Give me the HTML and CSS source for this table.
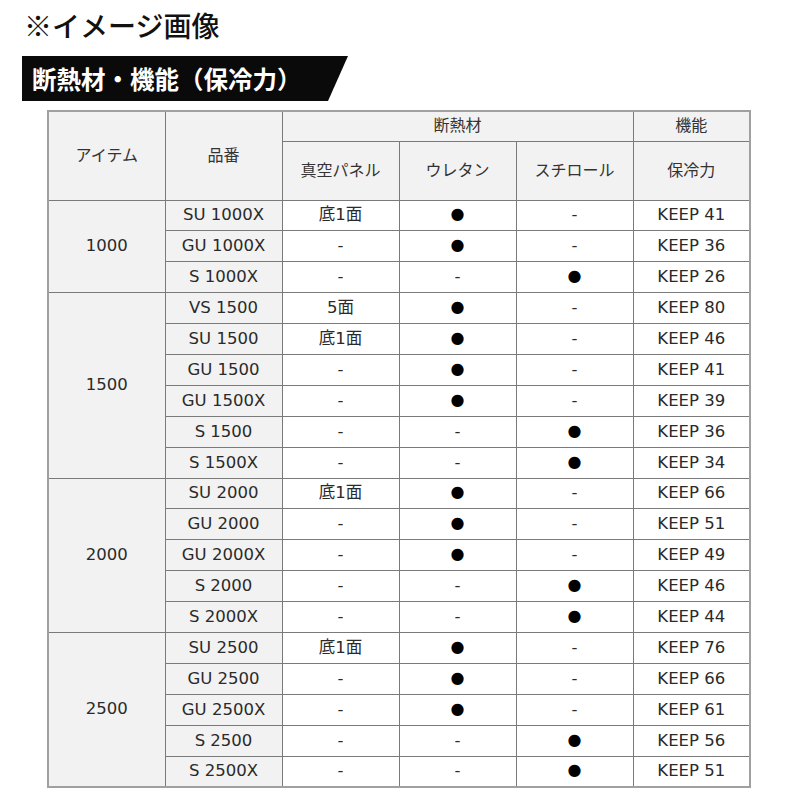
FILE: index.html
```html
<!DOCTYPE html>
<html lang="ja">
<head>
<meta charset="utf-8">
<link rel="stylesheet" href="styles.css">
</head>
<body>
<div class="page">
  <h1 class="title">※イメージ画像</h1>
  <div class="banner"><span class="banner-text">断熱材・機能（保冷力）</span></div>
  <table class="spec">
    <colgroup>
      <col class="c"><col class="c"><col class="c"><col class="c"><col class="c"><col class="c">
    </colgroup>
    <thead>
      <tr class="h1">
        <th rowspan="2">アイテム</th>
        <th rowspan="2">品番</th>
        <th colspan="3">断熱材</th>
        <th>機能</th>
      </tr>
      <tr class="h2">
        <th>真空パネル</th>
        <th>ウレタン</th>
        <th>スチロール</th>
        <th>保冷力</th>
      </tr>
    </thead>
    <tbody>
      <tr><td class="g" rowspan="3">1000</td><td class="g">SU 1000X</td><td>底1面</td><td><span class="dot">●</span></td><td>-</td><td>KEEP 41</td></tr>
      <tr><td class="g">GU 1000X</td><td>-</td><td><span class="dot">●</span></td><td>-</td><td>KEEP 36</td></tr>
      <tr><td class="g">S 1000X</td><td>-</td><td>-</td><td><span class="dot">●</span></td><td>KEEP 26</td></tr>

      <tr><td class="g" rowspan="6">1500</td><td class="g">VS 1500</td><td>5面</td><td><span class="dot">●</span></td><td>-</td><td>KEEP 80</td></tr>
      <tr><td class="g">SU 1500</td><td>底1面</td><td><span class="dot">●</span></td><td>-</td><td>KEEP 46</td></tr>
      <tr><td class="g">GU 1500</td><td>-</td><td><span class="dot">●</span></td><td>-</td><td>KEEP 41</td></tr>
      <tr><td class="g">GU 1500X</td><td>-</td><td><span class="dot">●</span></td><td>-</td><td>KEEP 39</td></tr>
      <tr><td class="g">S 1500</td><td>-</td><td>-</td><td><span class="dot">●</span></td><td>KEEP 36</td></tr>
      <tr><td class="g">S 1500X</td><td>-</td><td>-</td><td><span class="dot">●</span></td><td>KEEP 34</td></tr>

      <tr><td class="g" rowspan="5">2000</td><td class="g">SU 2000</td><td>底1面</td><td><span class="dot">●</span></td><td>-</td><td>KEEP 66</td></tr>
      <tr><td class="g">GU 2000</td><td>-</td><td><span class="dot">●</span></td><td>-</td><td>KEEP 51</td></tr>
      <tr><td class="g">GU 2000X</td><td>-</td><td><span class="dot">●</span></td><td>-</td><td>KEEP 49</td></tr>
      <tr><td class="g">S 2000</td><td>-</td><td>-</td><td><span class="dot">●</span></td><td>KEEP 46</td></tr>
      <tr><td class="g">S 2000X</td><td>-</td><td>-</td><td><span class="dot">●</span></td><td>KEEP 44</td></tr>

      <tr><td class="g" rowspan="5">2500</td><td class="g">SU 2500</td><td>底1面</td><td><span class="dot">●</span></td><td>-</td><td>KEEP 76</td></tr>
      <tr><td class="g">GU 2500</td><td>-</td><td><span class="dot">●</span></td><td>-</td><td>KEEP 66</td></tr>
      <tr><td class="g">GU 2500X</td><td>-</td><td><span class="dot">●</span></td><td>-</td><td>KEEP 61</td></tr>
      <tr><td class="g">S 2500</td><td>-</td><td>-</td><td><span class="dot">●</span></td><td>KEEP 56</td></tr>
      <tr><td class="g">S 2500X</td><td>-</td><td>-</td><td><span class="dot">●</span></td><td>KEEP 51</td></tr>
    </tbody>
  </table>
</div>
</body>
</html>
```

FILE: styles.css
```css
* { box-sizing: border-box; }
html, body { margin: 0; padding: 0; background: #fff; }
.page {
  width: 800px;
  height: 800px;
  padding: 8px 0 0 0;
  font-family: "DejaVu Sans", "Noto Sans CJK JP", sans-serif;
  color: #222;
}
.title {
  margin: 0 0 0 24px;
  height: 48px;
  font-family: "Noto Sans CJK JP", sans-serif;
  font-weight: 500;
  font-size: 28px;
  line-height: 34px;
  color: #111;
}
.banner {
  margin-left: 22px;
  width: 326px;
  height: 45px;
  background: #0a0a0a;
  clip-path: polygon(0 0, 100% 0, calc(100% - 20px) 100%, 0 100%);
  display: flex;
  align-items: center;
  padding-left: 10px;
}
.banner-text {
  font-family: "Noto Sans CJK JP", sans-serif;
  font-weight: 700;
  font-size: 24.5px;
  line-height: 1;
  color: #fff;
  margin-top: 1px;
}
.spec {
  margin: 9px 0 0 47px;
  border-collapse: collapse;
  table-layout: fixed;
  width: 702px;
  border: 2px solid #a0a0a0;
}
.spec col.c { width: 117px; }
.spec th, .spec td {
  border: 1px solid #7a7a7a;
  text-align: center;
  vertical-align: middle;
  padding: 0;
}
.spec th {
  background: #f2f2f2;
  font-family: "Noto Sans CJK JP", sans-serif;
  font-weight: 400;
  font-size: 16px;
  line-height: 20px;
  color: #333;
  padding-bottom: 4px;
}
.spec tr.h1 { height: 30px; }
.spec tr.h2 { height: 59px; }
.spec tbody tr { height: 30.9px; }
.spec td {
  font-size: 16.5px;
  line-height: 20px;
  color: #2a2a2a;
}
.spec td.g { background: #f2f2f2; }
.dot {
  font-family: "DejaVu Sans", sans-serif;
  font-size: 16px;
  color: #000;
  vertical-align: 2px;
}
```
